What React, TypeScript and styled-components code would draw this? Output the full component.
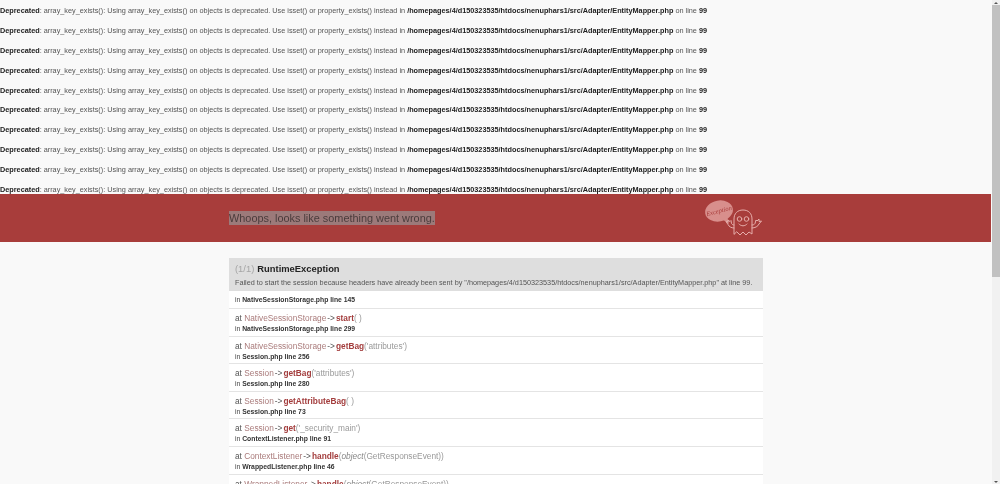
import styled, { createGlobalStyle } from 'styled-components';

const deprecations = Array.from({ length: 10 }, (_, i) => i);

type Arg = { text: string; object?: boolean };
type Frame = { cls: string; method: string; args?: Arg; file: string; line: number };

const frames: Frame[] = [
  { cls: 'NativeSessionStorage', method: 'start', file: 'NativeSessionStorage.php', line: 299 },
  { cls: 'NativeSessionStorage', method: 'getBag', args: { text: "'attributes'" }, file: 'Session.php', line: 256 },
  { cls: 'Session', method: 'getBag', args: { text: "'attributes'" }, file: 'Session.php', line: 280 },
  { cls: 'Session', method: 'getAttributeBag', file: 'Session.php', line: 73 },
  { cls: 'Session', method: 'get', args: { text: "'_security_main'" }, file: 'ContextListener.php', line: 91 },
  { cls: 'ContextListener', method: 'handle', args: { text: 'GetResponseEvent', object: true }, file: 'WrappedListener.php', line: 46 },
  { cls: 'WrappedListener', method: 'handle', args: { text: 'GetResponseEvent', object: true }, file: 'TraceableFirewallListener.php', line: 35 },
];

const GlobalStyle = createGlobalStyle`
  html, body {
    margin: 0;
    height: 100%;
    overflow: hidden;
    background: #f9f9f9;
  }
  body {
    font-family: "Liberation Sans", Arial, sans-serif;
    color: #333;
  }
`;

const Window = styled.div`
  display: flex;
  height: 484px;
  overflow: hidden;
`;

const Page = styled.main`
  flex: 1;
  min-width: 0;
  overflow: hidden;
  will-change: transform;
`;

const Notices = styled.div`
  height: 194px;
  padding-top: 1px;
  box-sizing: border-box;
`;

const Notice = styled.p`
  margin: 0;
  height: 19.88px;
  line-height: 19.88px;
  font-size: 7.29px;
  color: #555;
  white-space: nowrap;
  b {
    color: #222;
  }
`;

const Banner = styled.header`
  height: 48px;
  background: #a83d3b;
`;

const BannerInner = styled.div`
  width: 534px;
  height: 100%;
  margin-left: 229px;
  display: flex;
  align-items: center;
  justify-content: space-between;
`;

const Title = styled.h1`
  margin: 0 0 1px;
  font-size: 10.9px;
  line-height: 14px;
  font-weight: 400;
  color: #4a3c3c;
  background: #9c7a7a;
`;

const Content = styled.section`
  width: 534px;
  margin: 16px 0 0 229px;
`;

const CardHead = styled.div`
  height: 33px;
  box-sizing: border-box;
  padding: 4px 6px 0;
  background: #dedede;
`;

const HeadTitle = styled.h2`
  margin: 0;
  font-size: 9.4px;
  line-height: 13px;
  font-weight: 700;
  color: #222;
  span {
    font-weight: 400;
    color: #a5a5a5;
    margin-right: 3px;
  }
`;

const HeadMessage = styled.p`
  margin: 3px 0 0;
  font-size: 7.26px;
  line-height: 10px;
  color: #555;
  white-space: nowrap;
`;

const Row = styled.div<{ $first?: boolean }>`
  height: ${({ $first }) => ($first ? '18px' : '27.6px')};
  box-sizing: border-box;
  padding: ${({ $first }) => ($first ? '4px' : '3px')} 6px 0;
  background: #fff;
  border-bottom: 1px solid #e4e4e4;
`;

const Call = styled.div`
  font-size: 8.3px;
  line-height: 12px;
  color: #555;
  white-space: nowrap;
`;

const ClassName = styled.span`
  color: #a97a7a;
`;

const Arrow = styled.span`
  margin: 0 1px;
`;

const Method = styled.strong`
  color: #a33d3d;
`;

const Args = styled.span`
  color: #999;
  em {
    color: #888;
  }
`;

const Location = styled.div`
  font-size: 6.8px;
  line-height: 9px;
  color: #444;
  white-space: nowrap;
  b {
    color: #333;
  }
`;

const Scrollbar = styled.aside`
  width: 8px;
  height: 100%;
  margin-left: 1px;
  display: flex;
  flex-direction: column;
  background: #f1f1f1;
`;

const ScrollArrow = styled.div<{ $down?: boolean }>`
  height: 5px;
  display: flex;
  align-items: center;
  justify-content: center;
  &::before {
    content: '';
    border-left: 2px solid transparent;
    border-right: 2px solid transparent;
    ${({ $down }) => ($down ? 'border-top' : 'border-bottom')}: 2px solid #555;
  }
`;

const ScrollThumb = styled.div`
  height: 272px;
  background: #c1c1c1;
`;

const ScrollTrack = styled.div`
  flex: 1;
`;

const GhostLogo = () => (
  <svg width="62" height="40" viewBox="0 0 62 40" fill="none" aria-hidden="true">
    <ellipse cx="18" cy="13" rx="14" ry="10.5" fill="#d88f8c" transform="rotate(-10 18 13)" />
    <path d="M21 21l7 5-2-8z" fill="#d88f8c" />
    <text x="18" y="15" textAnchor="middle" fontFamily="Liberation Serif, serif" fontStyle="italic" fontSize="6.6" fill="#a83d3b" transform="rotate(-14 18 13)">
      Exception
    </text>
    <g stroke="#e6aeab" strokeWidth="1" strokeLinecap="round" strokeLinejoin="round">
      <path d="M33 36V21c0-5.500 3.500-9 9-9s9 3.500 9 9v15l-3-2-3 3-3-3-3 3-3-3z" />
      <circle cx="38.500" cy="21" r="2.300" />
      <circle cx="45.500" cy="21" r="2.300" />
      <path d="M38 26c2 2.500 6 2.500 8 0" />
      <path d="M33 30c-3 0-5-1.500-6-3.500l-2-3 2 .5 0-2 2 1.500 1-1 .5 3c.6 1 1.500 1.500 2.500 1.500" />
      <path d="M51 30c3 0 6-1.500 7-4l2.500-3-2.500.5 0-2.500-2 2-1-1-1 3.500c-.6 1-1.500 1.500-3 1.500" />
    </g>
  </svg>
);

const App = () => {
  return (
    <Window>
      <GlobalStyle />
      <Page>
        <Notices>
          {deprecations.map((i) => (
            <Notice key={i}>
              <b>Deprecated</b>: array_key_exists(): Using array_key_exists() on objects is deprecated. Use isset() or property_exists() instead in <b>/homepages/4/d150323535/htdocs/nenuphars1/src/Adapter/EntityMapper.php</b> on line <b>99</b>
            </Notice>
          ))}
        </Notices>
        <Banner>
          <BannerInner>
            <Title>Whoops, looks like something went wrong.</Title>
            <GhostLogo />
          </BannerInner>
        </Banner>
        <Content>
          <CardHead>
            <HeadTitle>
              <span>(1/1)</span>RuntimeException
            </HeadTitle>
            <HeadMessage>
              Failed to start the session because headers have already been sent by "/homepages/4/d150323535/htdocs/nenuphars1/src/Adapter/EntityMapper.php" at line 99.
            </HeadMessage>
          </CardHead>
          <Row $first>
            <Location>
              in <b>NativeSessionStorage.php line 145</b>
            </Location>
          </Row>
          {frames.map((f, i) => (
            <Row key={i}>
              <Call>
                at <ClassName>{f.cls}</ClassName><Arrow>-&gt;</Arrow><Method>{f.method}</Method>
                <Args>
                  (
                  {f.args ? (
                    f.args.object ? (
                      <>
                        <em>object</em>({f.args.text})
                      </>
                    ) : (
                      f.args.text
                    )
                  ) : (
                    ' '
                  )}
                  )
                </Args>
              </Call>
              <Location>
                in <b>{f.file} line {f.line}</b>
              </Location>
            </Row>
          ))}
        </Content>
      </Page>
      <Scrollbar>
        <ScrollArrow />
        <ScrollThumb />
        <ScrollTrack />
        <ScrollArrow $down />
      </Scrollbar>
    </Window>
  );
};

export default App;
